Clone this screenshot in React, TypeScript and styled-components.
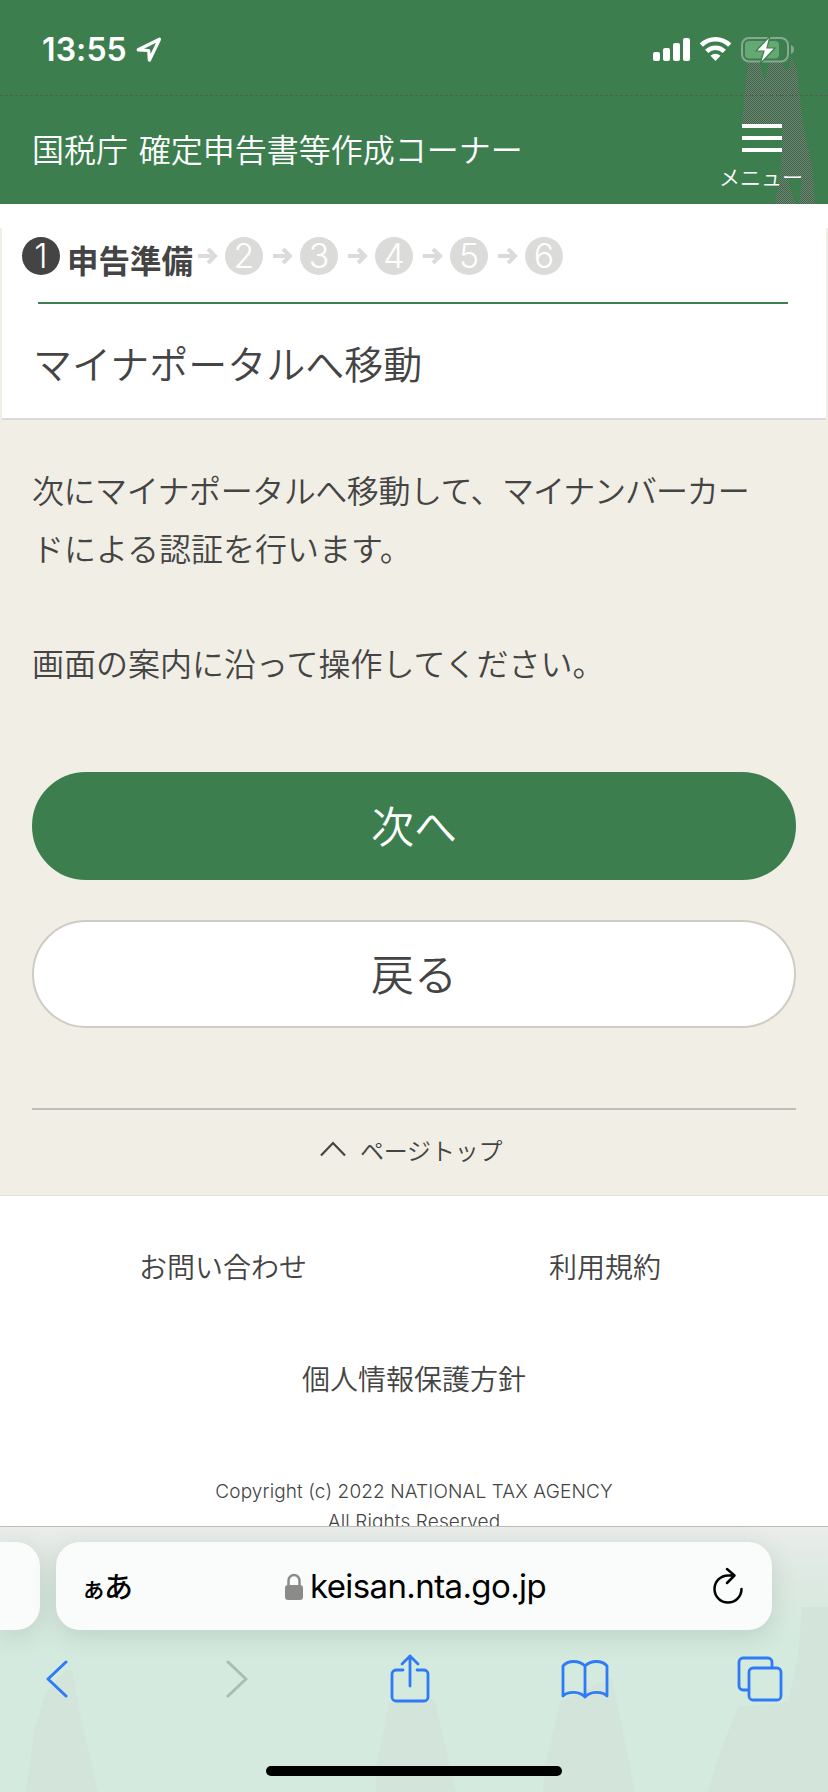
import React from 'react';
import styled, { createGlobalStyle } from 'styled-components';

const GREEN = '#3d7e4f';
const INK = '#444444';
const BLUE = '#2f7bf6';

const GlobalStyle = createGlobalStyle`
  * { box-sizing: border-box; }
  body {
    margin: 0;
    background: #fff;
    color: ${INK};
    font-family: "Noto Sans CJK JP", sans-serif;
    font-weight: 350;
  }
  p, h1 { margin: 0; font-weight: inherit; }
  svg { display: block; flex: none; }
`;

const Screen = styled.div`
  width: 828px;
  height: 1792px;
  display: flex;
  flex-direction: column;
  overflow: hidden;
`;

const TopArea = styled.div`
  position: relative;
  flex: none;
  height: 204px;
  background: ${GREEN};
  color: #fff;
`;

const Shade = styled.svg`
  position: absolute;
  left: 0;
  bottom: 0;
`;

const StatusBar = styled.div`
  position: relative;
  height: 96px;
  padding: 0 33px 0 42px;
  border-bottom: 1px dashed #535e50;
  display: flex;
  justify-content: space-between;
`;

const Clock = styled.div`
  display: flex;
  gap: 9px;
  padding-top: 31px;
  font: 600 32px/38px Inter, sans-serif;
  letter-spacing: 0.1px;
  svg { margin-top: 6px; }
`;

const StatusIcons = styled.div`
  display: flex;
  gap: 8px;
  padding-top: 36px;
`;

const SiteHeader = styled.header`
  position: relative;
  height: 108px;
  padding: 0 24px 0 32px;
  display: flex;
  justify-content: space-between;
`;

const SiteName = styled.div`
  padding-top: 29px;
  font-size: 32px;
  line-height: 46px;
  word-spacing: 3.5px;
  white-space: nowrap;
`;

const MenuButton = styled.div`
  width: 86px;
  padding-top: 28px;
  display: flex;
  flex-direction: column;
  align-items: center;
  gap: 8px;
  font-size: 21px;
  line-height: 32px;
  white-space: nowrap;
`;

const MenuBars = styled.div`
  width: 40px;
  height: 28px;
  margin-left: 2px;
  border-top: 4px solid #fff;
  border-bottom: 4px solid #fff;
  display: flex;
  align-items: center;
  &::before { content: ''; width: 100%; height: 4px; background: #fff; }
`;

const Page = styled.main`
  flex: none;
  height: 1322px;
  overflow: hidden;
`;

const HeadGap = styled.div`
  height: 24px;
  background: #fff;
`;

const Content = styled.div`
  height: 968px;
  padding: 0 2px;
  background: #f1eee5;
  border-bottom: 1px solid #e4e3db;
`;

const TitleCard = styled.section`
  height: 192px;
  background: #fff;
  border-bottom: 2px solid #dadada;
`;

const Steps = styled.div`
  height: 74px;
  padding: 9px 0 0 20px;
  display: flex;
  align-items: flex-start;
`;

const StepNumber = styled.div<{ $active?: boolean }>`
  width: 38px;
  height: 38px;
  border-radius: 50%;
  background: ${p => (p.$active ? INK : '#dbdbd9')};
  color: #fff;
  font: 300 34px/38px Inter, sans-serif;
  text-align: center;
`;

const StepLabel = styled.div`
  width: 131px;
  margin: -1px 0 0 7px;
  font-size: 31.5px;
  font-weight: 700;
  line-height: 46px;
  white-space: nowrap;
`;

const StepArrow = styled.svg<{ $first?: boolean }>`
  margin: 10px 7px 0 ${p => (p.$first ? 0 : 10)}px;
`;

const Title = styled.h1`
  margin: 0 38px 0 36px;
  border-top: 2px solid ${GREEN};
  padding-top: 29px;
  font-size: 39px;
  line-height: 58px;
  white-space: nowrap;
  text-indent: -5px;
`;

const Body = styled.section`
  padding: 41px 30px 0;
`;

const Message = styled.p`
  font-size: 32px;
  line-height: 57.6px;
  white-space: nowrap;
`;

const Kerned = styled.span<{ $by: number }>`
  letter-spacing: ${p => p.$by}px;
`;

const Actions = styled.div`
  margin-top: 80.6px;
  display: flex;
  flex-direction: column;
  gap: 40px;
`;

const ActionButton = styled.button<{ $primary?: boolean }>`
  height: 108px;
  border: 2px solid ${p => (p.$primary ? GREEN : '#cfccc5')};
  border-radius: 54px;
  background: ${p => (p.$primary ? GREEN : '#fff')};
  color: ${p => (p.$primary ? '#fff' : INK)};
  font: 350 43px/60px "Noto Sans CJK JP", sans-serif;
  padding: 0 0 3px;
`;

const PageTop = styled.div`
  margin-top: 80px;
  border-top: 2px solid #bcbfb8;
  padding: 22px 0 0 288px;
  display: flex;
  gap: 14px;
  font-size: 24px;
  line-height: 36px;
  letter-spacing: -0.2px;
  white-space: nowrap;
  svg { margin-top: 9px; }
`;

const Footer = styled.footer`
  padding: 49px 32px 0;
  display: grid;
  grid-template-columns: 1fr 1fr;
  text-align: center;
  font-size: 28px;
  line-height: 42px;
`;

const WideLink = styled.div`
  grid-column: 1 / -1;
  margin-top: 70px;
`;

const Copyright = styled.div`
  grid-column: 1 / -1;
  margin-top: 78px;
  font: 300 19px/30px Inter, sans-serif;
  letter-spacing: 0.12px;
`;

const BrowserBar = styled.div`
  position: relative;
  flex: 1;
  border-top: 1px solid #b9bfb8;
  background: linear-gradient(#eaedea 0, #dde9e2 50px, #d5eadf 110px);
`;

const BarShade = styled.svg`
  position: absolute;
  left: 0;
  top: 0;
`;

const AddressRow = styled.div`
  position: relative;
  padding-top: 15px;
  display: flex;
  gap: 16px;
`;

const NeighbourTab = styled.div`
  width: 40px;
  height: 88px;
  border-radius: 0 24px 24px 0;
  background: #fafcfb;
  box-shadow: 0 6px 24px rgba(60, 90, 70, 0.16);
`;

const AddressBar = styled.div`
  width: 716px;
  height: 88px;
  padding: 0 28px 0 25px;
  border-radius: 24px;
  background: #fafcfb;
  box-shadow: 0 6px 24px rgba(60, 90, 70, 0.16);
  display: grid;
  grid-template-columns: 1fr auto 1fr;
  align-items: center;
  color: #000;
`;

const ReaderButton = styled.div`
  display: flex;
  align-items: baseline;
  font-size: 29px;
  font-weight: 500;
  line-height: 40px;
`;

const SmallKana = styled.span`
  font-size: 25px;
  margin-right: -2px;
`;

const Host = styled.div`
  display: flex;
  align-items: center;
  gap: 7px;
  margin-left: 6px;
  font: 400 33px/40px Inter, sans-serif;
  letter-spacing: -0.6px;
  white-space: nowrap;
`;

const Reload = styled.svg`
  justify-self: end;
`;

const Toolbar = styled.nav`
  position: relative;
  height: 98px;
  padding-left: 45px;
  display: flex;
  align-items: center;
`;

const Tool = styled.div<{ $gap?: number }>`
  margin-right: ${p => p.$gap ?? 0}px;
`;

const HomeIndicator = styled.div`
  position: relative;
  width: 296px;
  height: 10px;
  margin: 38px auto 0;
  border-radius: 5px;
  background: #000;
`;

const Arrow = ({ first }: { first?: boolean }) => (
  <StepArrow $first={first} width="20" height="18" viewBox="0 0 20 18" fill="none" stroke="#dbdbd9" strokeWidth="4">
    <path d="M0 9H17M10 2l7 7-7 7" />
  </StepArrow>
);

export default function App() {
  return (
    <>
      <GlobalStyle />
      <Screen>
        <TopArea>
          <Shade width="828" height="204" viewBox="0 0 828 204">
            <defs>
              <pattern id="speck" width="2" height="2" patternUnits="userSpaceOnUse">
                <path d="M0 0h1v1H0zM1 1h1v1H1z" fill="#535653" />
                <path d="M1 0h1v1H1zM0 1h1v1H0z" fill="#589568" />
              </pattern>
            </defs>
            <path
              d="M748 62H760L763 78H766L769 62H782L785 70H788L791 56L797 70L799 92L804 130L812 165L815 204H799L802 178H788L795 204H775L780 175L782 150V124H742L745 90Z"
              fill="url(#speck)"
            />
          </Shade>
          <StatusBar>
            <Clock>
              13:55
              <svg width="26" height="26" viewBox="0 0 26 26" fill="none" stroke="#fff" strokeWidth="3.2" strokeLinejoin="round">
                <path d="M23.5 2.2 2.2 12.8l10.5.7.7 9.7z" />
              </svg>
            </Clock>
            <StatusIcons>
              <svg width="38" height="26" viewBox="0 0 38 26" fill="#fff">
                <rect x="0" y="16" width="7" height="9" rx="2" />
                <rect x="10" y="12" width="7" height="13" rx="2" />
                <rect x="20" y="7" width="7" height="18" rx="2" />
                <rect x="30" y="2" width="7" height="23" rx="2" />
              </svg>
              <svg width="34" height="26" viewBox="0 0 34 26">
                <g fill="none" stroke="#fff" strokeWidth="4.6">
                  <path d="M2.3 9.2a20 20 0 0 1 28.4 0" />
                  <path d="M7.7 15.4a12.5 12.5 0 0 1 17.6 0" />
                </g>
                <path d="m16.5 25-5-5.2a7.3 7.3 0 0 1 10 0z" fill="#fff" />
              </svg>
              <svg width="54" height="28" viewBox="0 0 54 28">
                <rect x="1" y="2" width="46" height="23.5" rx="7" fill={GREEN} stroke="#88a892" strokeWidth="2" />
                <rect x="4" y="5" width="34" height="17.5" rx="4" fill="#63a971" />
                <path d="M50 9c4 1 4 8 0 9z" fill="#88a892" />
                <path d="M29 0 15 15h8l-4 13 15-16h-8z" fill="#fff" stroke={GREEN} strokeWidth="1.2" />
              </svg>
            </StatusIcons>
          </StatusBar>
          <SiteHeader>
            <SiteName>国税庁 確定申告書等作成コーナー</SiteName>
            <MenuButton>
              <MenuBars />
              メニュー
            </MenuButton>
          </SiteHeader>
        </TopArea>

        <Page>
          <HeadGap />
          <Content>
            <TitleCard>
              <Steps>
                <StepNumber $active>1</StepNumber>
                <StepLabel>申告準備</StepLabel>
                <Arrow first />
                <StepNumber>2</StepNumber>
                {[3, 4, 5, 6].map(n => (
                  <React.Fragment key={n}>
                    <Arrow />
                    <StepNumber>{n}</StepNumber>
                  </React.Fragment>
                ))}
              </Steps>
              <Title>マイナポータルへ移動</Title>
            </TitleCard>
            <Body>
              <Message>
                <Kerned $by={-0.45}>次にマイナポータルへ移動して、</Kerned>
                <Kerned $by={-1.1}>マイナンバーカー</Kerned>
                <br />
                ドによる認証を行います。
                <br />
                <br />
                画面の案内に沿って操作してください。
              </Message>
              <Actions>
                <ActionButton $primary>次へ</ActionButton>
                <ActionButton>戻る</ActionButton>
              </Actions>
              <PageTop>
                <svg width="26" height="16" viewBox="0 0 26 16" fill="none" stroke={INK} strokeWidth="2.2">
                  <path d="M1 14.5 13 2l12 12.5" />
                </svg>
                ページトップ
              </PageTop>
            </Body>
          </Content>
          <Footer>
            <div>お問い合わせ</div>
            <div>利用規約</div>
            <WideLink>個人情報保護方針</WideLink>
            <Copyright>
              Copyright (c) 2022 NATIONAL TAX AGENCY
              <br />
              All Rights Reserved
            </Copyright>
          </Footer>
        </Page>

        <BrowserBar>
          <BarShade width="828" height="265" viewBox="0 0 828 265" fill="#d3e4db">
            <path d="M46 165 34 205 26 265h72L82 195 72 143l-6 0z" />
            <path d="M389 176 376 240v25h80L434 170z" />
            <path d="M560 175 545 240l-2 25h92L612 150z" />
            <path d="M738 180 720 225l-12 40h120V80h-26l-4 50-10 45z" />
          </BarShade>
          <AddressRow>
            <NeighbourTab />
            <AddressBar>
              <ReaderButton>
                <SmallKana>ぁ</SmallKana>あ
              </ReaderButton>
              <Host>
                <svg width="18" height="27" viewBox="0 0 18 27">
                  <path d="M3.5 13V7.5a5.5 5.5 0 0 1 11 0V13" fill="none" stroke="#8b8c8a" strokeWidth="2.5" />
                  <rect y="12" width="18" height="15" rx="3" fill="#8b8c8a" />
                </svg>
                keisan.nta.go.jp
              </Host>
              <Reload width="32" height="38" viewBox="0 0 32 38" fill="none" stroke="#000" strokeWidth="2.5" strokeLinecap="round" strokeLinejoin="round">
                <path d="M29.5 22a13.5 13.5 0 1 1-13.5-13.5h6M15 2l7.5 6.5L15 16" />
              </Reload>
            </AddressBar>
          </AddressRow>
          <Toolbar>
            <Tool $gap={156}>
              <svg width="24" height="38" viewBox="0 0 24 38" fill="none" stroke={BLUE} strokeWidth="3" strokeLinecap="round" strokeLinejoin="round">
                <path d="M21 2 3 19l18 17" />
              </svg>
            </Tool>
            <Tool $gap={141}>
              <svg width="24" height="38" viewBox="0 0 24 38" fill="none" stroke="#aebbb3" strokeWidth="3" strokeLinecap="round" strokeLinejoin="round">
                <path d="m3 2 18 17L3 36" />
              </svg>
            </Tool>
            <Tool $gap={131}>
              <svg width="40" height="50" viewBox="0 0 40 50" fill="none" stroke={BLUE} strokeWidth="2.8" strokeLinecap="round" strokeLinejoin="round">
                <path d="M13 16H6a4 4 0 0 0-4 4v23a4 4 0 0 0 4 4h28a4 4 0 0 0 4-4V20a4 4 0 0 0-4-4h-7M20 32V2M12 10l8-8 8 8" />
              </svg>
            </Tool>
            <Tool $gap={128}>
              <svg width="48" height="40" viewBox="0 0 48 40" fill="none" stroke={BLUE} strokeWidth="2.8" strokeLinecap="round" strokeLinejoin="round">
                <path d="M24 7C18 1 7 1 2 7v30c5-5 17-5 22 1 5-6 17-6 22-1V7C41 1 30 1 24 7zv31" />
              </svg>
            </Tool>
            <Tool>
              <svg width="46" height="46" viewBox="0 0 46 46" fill="none" stroke={BLUE} strokeWidth="2.8">
                <path d="M11 34H6a4 4 0 0 1-4-4V6a4 4 0 0 1 4-4h25a4 4 0 0 1 4 4v5" />
                <rect x="12" y="12" width="32" height="32" rx="4" />
              </svg>
            </Tool>
          </Toolbar>
          <HomeIndicator />
        </BrowserBar>
      </Screen>
    </>
  );
}
